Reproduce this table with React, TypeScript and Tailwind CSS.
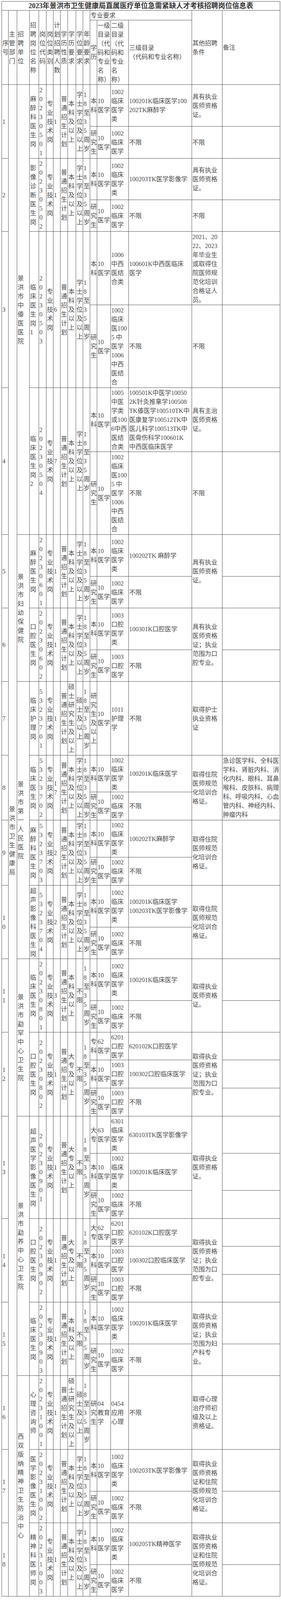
import React from "react";

type Lines = string[];
const V = (s: string): Lines => Array.from(s);

type Sub = { edu: Lines; l1: Lines; l2: Lines; l3: Lines; other?: Lines };
type Job = {
  no: string;
  name: string;
  code: string;
  count: string;
  kind?: string;
  nature?: string;
  eduReq?: string;
  degree?: string;
  age?: string;
  unit?: { name: string; span: number };
  subs: Sub[];
  other?: Lines;
  note?: Lines;
};

const med = ["10", "医学"];
const lc4 = ["1002", "临床", "医学", "类"];
const lc3 = ["1002", "临床", "医学"];
const kq3 = ["1003", "口腔", "医学"];
const zxy = ["1002", "临床", "医100", "5 中", "医学", "1006", "中西", "医结", "合"];

const bk = (l3: Lines, other?: Lines, l2: Lines = lc4): Sub => ({ edu: V("本科"), l1: med, l2, l3, other });
const yjs = (other?: Lines, l2: Lines = lc3): Sub => ({ edu: V("研究生"), l1: med, l2, l3: ["不限"], other });

const zyys = ["具有执业", "医师资格", "证。"];
const qdys = ["取得执业", "医师资格", "证。"];
const zhuyuan = ["取得住院", "医师规范", "化培训合", "格证。"];
const kqzy = ["取得执业", "医师资格", "证；执业", "范围为口", "腔专业。"];
const ysgf = ["取得执业", "医师资格", "证和住院", "医师规范", "化培训合", "格证。"];

const jobs: Job[] = [
  {
    no: "1",
    unit: { name: "景洪市中傣医医院", span: 8 },
    name: "麻醉科医生岗",
    code: "20230501",
    count: "1",
    subs: [bk(["100201K临床医学100", "202TK麻醉学"], zyys), yjs(["不限"])],
  },
  {
    no: "2",
    name: "影像诊断医生岗",
    code: "20230502",
    count: "1",
    subs: [bk(["100203TK医学影像学"], zyys), yjs(["不限"])],
  },
  {
    no: "3",
    name: "临床医生岗1",
    code: "20230503",
    count: "6",
    subs: [
      bk(
        ["100601K中西医临床", "医学"],
        ["2021、20", "22、2023", "年毕业生", "或取得住", "院医师规", "范化培训", "合格证人", "员。"],
        ["1006", "中西", "医结", "合类"]
      ),
      yjs(["不限"], zxy),
    ],
  },
  {
    no: "4",
    name: "临床医生岗2",
    code: "20230504",
    count: "7",
    subs: [
      bk(
        [
          "100501K中医学10050",
          "2K针灸推拿学100508",
          "TK傣医学100510TK中",
          "医康复学100512TK中",
          "医儿科学100513TK中",
          "医骨伤科学100601K",
          "中西医临床医学",
        ],
        ["具有主治", "医师资格", "证。"],
        ["1005", "中医", "学类", "或100", "6中西", "医结", "合类"]
      ),
      yjs(["不限"], zxy),
    ],
  },
  {
    no: "5",
    unit: { name: "景洪市妇幼保健院", span: 4 },
    name: "麻醉医生岗",
    code: "20230601",
    count: "1",
    subs: [bk(["100202TK 麻醉学"]), yjs()],
    other: zyys,
  },
  {
    no: "6",
    name: "口腔医生岗",
    code: "20230602",
    count: "1",
    subs: [bk(["100301K口腔医学"], undefined, ["1003", "口腔", "医学", "类"]), yjs(undefined, kq3)],
    other: ["具有执业", "医师资格", "证；执业", "范围为口", "腔专业。"],
  },
  {
    no: "7",
    unit: { name: "景洪市第一人民医院", span: 7 },
    name: "临床护理岗",
    code: "5323701",
    count: "1",
    eduReq: "硕士研究生及以上",
    degree: "硕士及以上",
    subs: [
      {
        edu: V("研究生及以上"),
        l1: med,
        l2: ["1011", "护理", "学"],
        l3: ["不限"],
        other: ["取得护士", "执业资格", "证"],
      },
    ],
  },
  {
    no: "8",
    name: "临床医生岗",
    code: "5323702",
    count: "17",
    subs: [bk(["100201K临床医学"]), yjs()],
    other: zhuyuan,
    note: [
      "急诊医学科、全科医",
      "学科、肾脏内科、消",
      "化内科、眼科、耳鼻",
      "喉科、皮肤科、病理",
      "科、呼吸内科、心血",
      "管内科、神经内科、",
      "肿瘤内科",
    ],
  },
  {
    no: "9",
    name: "麻醉科医生岗",
    code: "5323703",
    count: "2",
    subs: [bk(["100202TK麻醉学"]), yjs()],
    other: zhuyuan,
    note: [],
  },
  {
    no: "10",
    name: "超声影像科医生岗",
    code: "5323704",
    count: "2",
    subs: [bk(["100201K临床医学", "100203TK医学影像学"]), yjs()],
    other: zhuyuan,
    note: [],
  },
  {
    no: "11",
    unit: { name: "景洪市勐罕中心卫生院", span: 5 },
    name: "临床医生岗",
    code: "20230801",
    count: "3",
    degree: "不限",
    subs: [bk(["100201K临床医学"]), yjs()],
    other: qdys,
  },
  {
    no: "12",
    name: "口腔医生岗",
    code: "20230802",
    count: "1",
    eduReq: "大专及以上",
    degree: "不限",
    subs: [
      { edu: V("专科"), l1: ["62", "医学"], l2: ["6201", "口腔", "医学"], l3: ["620102K口腔医学"] },
      bk(["100302口腔临床医学"], undefined, kq3),
      yjs(undefined, kq3),
    ],
    other: kqzy,
  },
  {
    no: "13",
    unit: { name: "景洪市勐养中心卫生院", span: 8 },
    name: "超声医学影像医生岗",
    code: "20230901",
    count: "1",
    eduReq: "大专及以上",
    degree: "不限",
    subs: [
      { edu: V("大专"), l1: ["63", "医学"], l2: ["6301", "临床", "医学", "类"], l3: ["630103TK医学影像学"] },
      bk(["100201K临床医学"]),
      yjs(),
    ],
    other: qdys,
  },
  {
    no: "14",
    name: "口腔医生岗",
    code: "20230902",
    count: "1",
    eduReq: "大专及以上",
    degree: "不限",
    subs: [
      { edu: V("大专"), l1: ["62", "医学"], l2: ["6201", "口腔", "医学"], l3: ["620102K口腔医学"] },
      bk(["100302口腔临床医学"], undefined, kq3),
      yjs(undefined, kq3),
    ],
    other: kqzy,
  },
  {
    no: "15",
    name: "临床医生岗",
    code: "20230903",
    count: "1",
    degree: "不限",
    subs: [bk(["100201K临床医学"]), yjs()],
    other: ["取得执业", "医师资格", "证；执业", "范围为妇", "产科专", "业。"],
  },
  {
    no: "16",
    unit: { name: "西双版纳精神卫生防治中心", span: 5 },
    name: "心理咨询师",
    code: "20231001",
    count: "1",
    eduReq: "硕士研究生及以上",
    degree: "硕士及以上",
    subs: [
      {
        edu: V("研究生"),
        l1: ["04", "教育", "学"],
        l2: ["0454", "应用", "心理"],
        l3: ["不限"],
        other: ["取得心理", "治疗师初", "级及以上", "资格证。"],
      },
    ],
  },
  {
    no: "17",
    name: "医学影像医生岗",
    code: "20231002",
    count: "1",
    subs: [bk(["100203TK医学影像学"]), yjs()],
    other: ysgf,
  },
  {
    no: "18",
    name: "精神科医师岗",
    code: "20231003",
    count: "1",
    subs: [bk(["100205TK精神医学"]), yjs()],
    other: ysgf,
  },
];

const totalSubs = jobs.reduce((n, j) => n + j.subs.length, 0);

const spanClass: Record<number, string> = {
  1: "",
  2: "row-span-2",
  3: "row-span-3",
  4: "row-span-4",
  5: "row-span-5",
  7: "row-span-7",
  8: "row-span-8",
  37: "row-span-37",
};

function Cell({ lines, span = 1, wide }: { lines: Lines; span?: number; wide?: string }) {
  return (
    <div
      className={`flex flex-col justify-center overflow-visible border-r border-b border-[#555] pl-px whitespace-nowrap ${spanClass[span] ?? ""} ${wide ?? ""}`}
    >
      {lines.map((l, i) => (
        <div key={i} className="h-[23px]">
          {l}
        </div>
      ))}
    </div>
  );
}

export default function App() {
  const cells: React.ReactNode[] = [];
  let k = 0;
  const add = (lines: Lines, span = 1) => cells.push(<Cell key={k++} lines={lines} span={span} />);

  jobs.forEach((job, ji) => {
    const n = job.subs.length;
    job.subs.forEach((sub, si) => {
      const first = si === 0;
      if (first) {
        add(V(job.no), n);
        if (ji === 0) add(V("景洪市卫生健康局"), totalSubs);
        if (job.unit) add(V(job.unit.name), job.unit.span);
        add(V(job.name), n);
        add(V(job.code), n);
        add(V(job.kind ?? "专业技术岗"), n);
        add(V(job.count), n);
        add(V(job.nature ?? "普通招生计划"), n);
        add(V(job.eduReq ?? "本科及以上"), n);
        add(V(job.degree ?? "学士学位及以上"), n);
        add(V(job.age ?? "18至35周岁"), n);
      }
      add(sub.edu);
      add(sub.l1);
      add(sub.l2);
      add(sub.l3);
      if (job.other) {
        if (first) add(job.other, n);
      } else add(sub.other ?? []);
      if (job.note) {
        if (first) add(job.note, n);
      } else add([]);
    });
  });

  return (
    <div className="w-[720px] bg-white pt-[3px] pb-[9px] pl-[4px] text-[16px] leading-[23px] text-[#4a4a4a] [font-family:'Liberation_Serif','Noto_Sans_CJK_SC',serif]">
      <div className="grid w-[714px] grid-cols-[17px_22px_32px_24px_19px_18px_18px_19px_21px_18px_18px_18px_35px_46px_162px_78px_148px] grid-rows-[23px_25px_165px_107px_82px_106px_81px_188px_212px_164px_212px_107px_81px_107px_81px_189px_94px_72px_95px_72px_107px_81px_107px_81px_71px_72px_72px_95px_95px_72px_71px_72px_71px_107px_81px_189px_107px_81px_107px_81px] border-t border-l border-[#555]">
        <div className="col-span-17 flex items-center justify-center border-r border-b border-[#555] text-[18px] font-bold text-[#333]">
          2023年景洪市卫生健康局直属医疗单位急需紧缺人才考核招聘岗位信息表
        </div>
        <Cell lines={V("序号")} span={2} />
        <Cell lines={V("主管部门")} span={2} />
        <Cell lines={V("招聘单位")} span={2} />
        <Cell lines={V("招聘岗位名称")} span={2} />
        <Cell lines={V("岗位代码")} span={2} />
        <Cell lines={V("岗位类别")} span={2} />
        <Cell lines={V("计划招聘人数")} span={2} />
        <Cell lines={V("学历性质")} span={2} />
        <Cell lines={V("学历要求")} span={2} />
        <Cell lines={V("学位要求")} span={2} />
        <Cell lines={V("年龄要求")} span={2} />
        <Cell lines={["专业要求"]} wide="col-span-4" />
        <Cell lines={["其他招聘", "条件"]} span={2} />
        <Cell lines={["备注"]} span={2} />
        <Cell lines={V("学历")} />
        <Cell lines={["一级", "目录", "（代", "码和", "专业", "名", "称）"]} />
        <Cell lines={["二级", "目录", "（代", "码和", "专业", "名", "称）"]} />
        <Cell lines={["三级目录", "（代码和专业名称）"]} />
        {cells}
      </div>
    </div>
  );
}
